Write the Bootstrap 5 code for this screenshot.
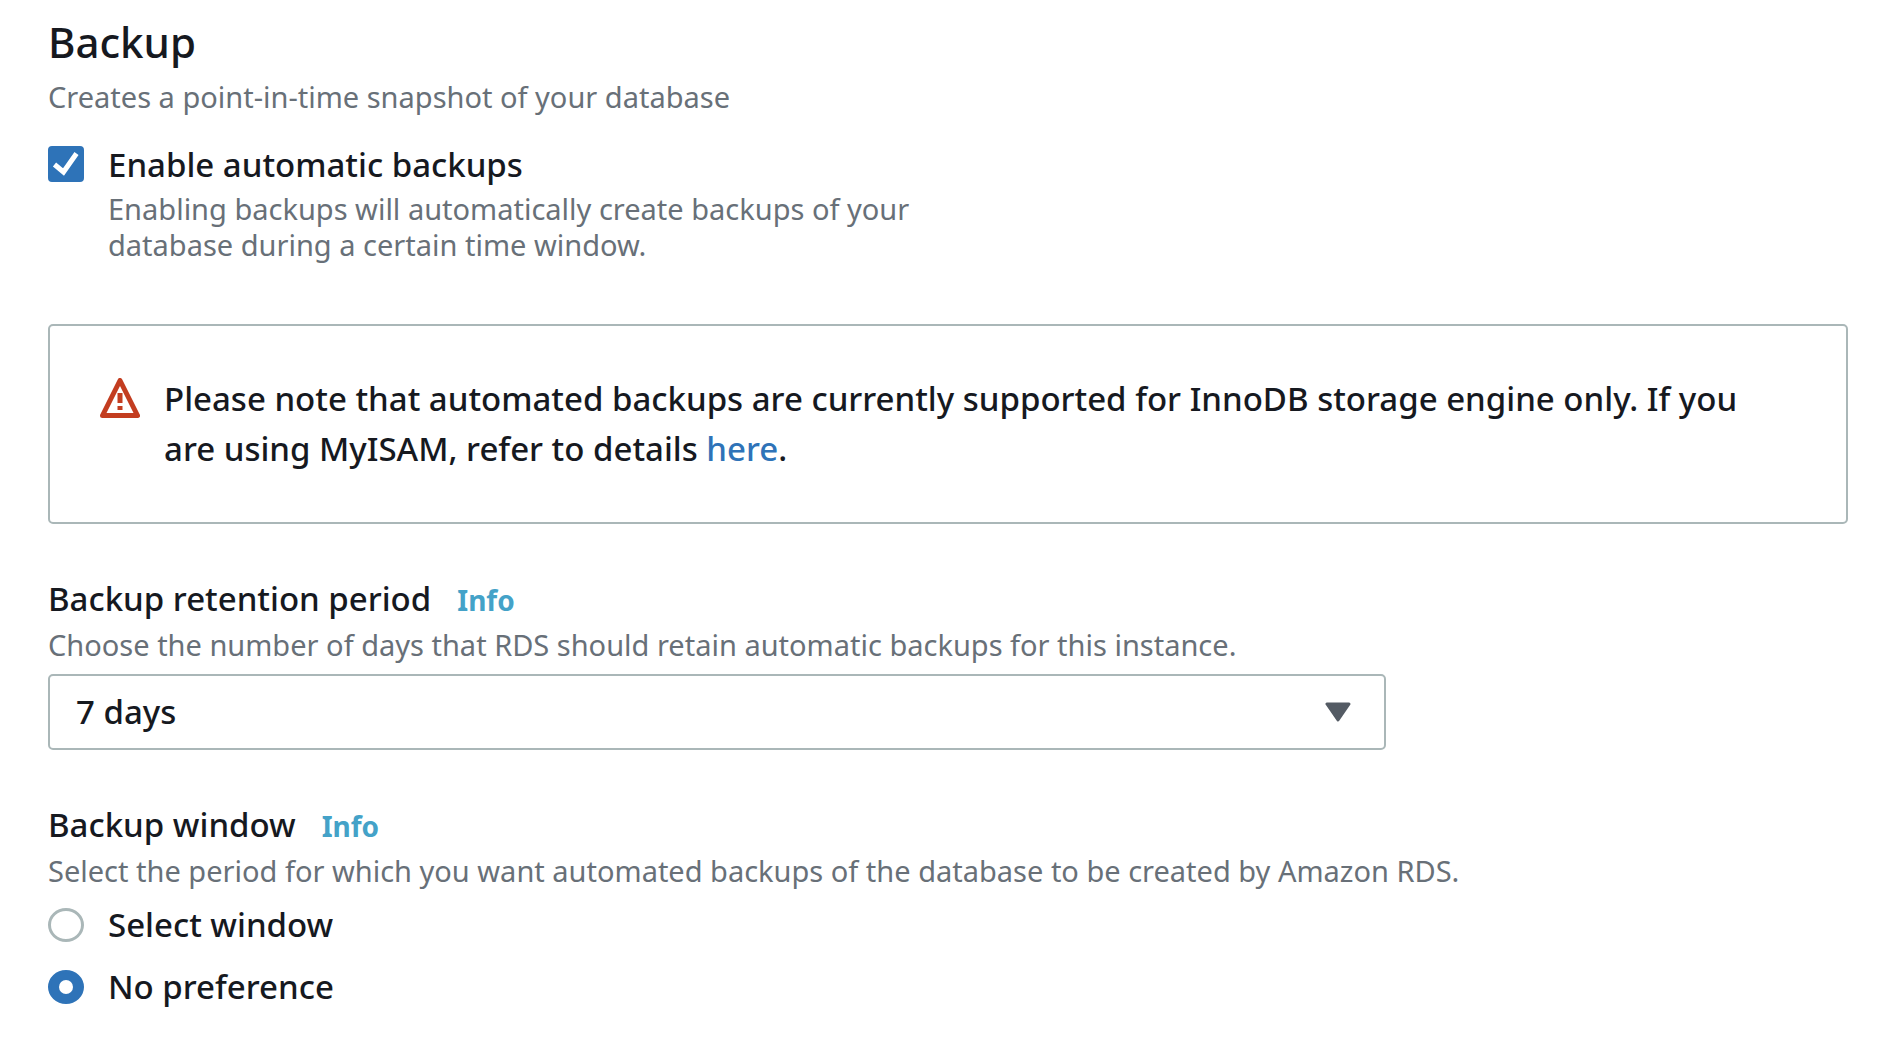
<!DOCTYPE html>
<html lang="en">
<head>
<meta charset="utf-8">
<meta name="viewport" content="width=device-width, initial-scale=1">
<title>Backup settings</title>
<link rel="stylesheet" href="https://cdn.jsdelivr.net/npm/bootstrap@5.3.0/dist/css/bootstrap.min.css">
<style>
  body { font-family: "Noto Sans", "Open Sans", sans-serif; font-size: 33px; font-weight: 500; line-height: 50px; color: #16191f; background: #fff; }
  .settings { padding: 15px 36px 36px 48px; }
  .settings-title { margin-bottom: 10px; font-size: 42px; line-height: 54px; font-weight: 500; }
  .hint { margin-bottom: 0; font-size: 29px; font-weight: 400; line-height: 36px; color: #687078; }
  .field .hint { margin-top: 3px; }
  .hint-narrow { max-width: 830px; margin-top: 1px; }
  .option { gap: 24px; }
  .option-lead { margin-top: 25px; }
  .option .form-check-input { width: 36px; height: 36px; margin: 6px 0 0; border: 2px solid #aab7b8; }
  .option .form-check-input[type=radio] { height: 34px; margin-top: 8px; border-width: 3px; }
  .option .form-check-input[type=checkbox] { border-radius: 4px; }
  .option .form-check-input:checked { background-color: #2e73b8; border-color: #2e73b8; background-size: 36px 36px; background-position: center; }
  .option .form-check-input[type=checkbox]:checked { background-image: url("data:image/svg+xml,%3Csvg xmlns='http://www.w3.org/2000/svg' viewBox='0 0 36 36'%3E%3Cpath d='M6.500 18.500L15.500 26L28.500 7.500' fill='none' stroke='%23fff' stroke-width='5'/%3E%3C/svg%3E"); }
  .option .form-check-input[type=radio]:checked { background-image: url("data:image/svg+xml,%3Csvg xmlns='http://www.w3.org/2000/svg' viewBox='0 0 36 36'%3E%3Ccircle cx='18' cy='18' r='7' fill='%23fff'/%3E%3C/svg%3E"); }
  .notice { margin-top: 61px; padding: 48px 60px 48px 50px; gap: 24px; border: 2px solid #aab7b8; border-radius: 5px; }
  .notice svg { margin-top: 4px; }
  .notice a { color: #2e73b8; }
  .field { margin-top: 50px; }
  .field-head { gap: 26px; }
  .info-link { font-size: 28px; font-weight: 700; line-height: 36px; color: #44a2c8; }
  .settings .form-select { height: 76px; margin-top: 11px; padding: 0 80px 0 26px; font-size: 33px; font-weight: 500; line-height: 50px; color: #16191f; border: 2px solid #aab7b8; border-radius: 5px;
    background-image: url("data:image/svg+xml,%3Csvg xmlns='http://www.w3.org/2000/svg' viewBox='0 0 26 20'%3E%3Cpath d='M2 2H24L13 18Z' fill='%23545b64' stroke='%23545b64' stroke-width='3' stroke-linejoin='round'/%3E%3C/svg%3E"); background-size: 26px 20px; background-position: right 33px center; }
  .choices { gap: 12px; margin-top: 11px; }
</style>
<script src="https://cdn.jsdelivr.net/npm/bootstrap@5.3.0/dist/js/bootstrap.bundle.min.js"></script>
</head>
<body>
<main class="settings">
  <h1 class="settings-title">Backup</h1>
  <p class="hint">Creates a point-in-time snapshot of your database</p>

  <div class="option option-lead d-flex">
    <input class="form-check-input flex-shrink-0" type="checkbox" id="autoBackup" aria-describedby="autoBackupHint" checked>
    <div>
      <label class="d-block" for="autoBackup">Enable automatic backups</label>
      <p class="hint hint-narrow" id="autoBackupHint">Enabling backups will automatically create backups of your database during a certain time window.</p>
    </div>
  </div>

  <div class="notice d-flex" role="note">
    <svg class="flex-shrink-0" width="40" height="40" viewBox="0 0 40 40" fill="none" aria-hidden="true">
      <path d="M20 2.500L37.500 37.500H2.500Z" stroke="#c33d20" stroke-width="5" stroke-linejoin="round"/>
      <path d="M20 15V25M20 28V32" stroke="#c33d20" stroke-width="5"/>
    </svg>
    <p class="mb-0">Please note that automated backups are currently supported for InnoDB storage engine only. If you are using MyISAM, refer to details <a class="text-decoration-none" href="#">here</a>.</p>
  </div>

  <section class="field">
    <div class="field-head d-flex align-items-baseline">
      <label for="retention">Backup retention period</label>
      <a class="info-link text-decoration-none" href="#">Info</a>
    </div>
    <p class="hint" id="retentionHint">Choose the number of days that RDS should retain automatic backups for this instance.</p>
    <div class="row gx-5">
      <div class="col-9">
        <select class="form-select" id="retention" aria-describedby="retentionHint">
          <option selected>7 days</option>
        </select>
      </div>
    </div>
  </section>

  <section class="field" role="radiogroup" aria-labelledby="windowLabel">
    <div class="field-head d-flex align-items-baseline">
      <span id="windowLabel">Backup window</span>
      <a class="info-link text-decoration-none" href="#">Info</a>
    </div>
    <p class="hint">Select the period for which you want automated backups of the database to be created by Amazon RDS.</p>
    <div class="choices d-flex flex-column">
      <div class="option d-flex">
        <input class="form-check-input flex-shrink-0" type="radio" name="window" id="windowSelect">
        <label for="windowSelect">Select window</label>
      </div>
      <div class="option d-flex">
        <input class="form-check-input flex-shrink-0" type="radio" name="window" id="windowNone" checked>
        <label for="windowNone">No preference</label>
      </div>
    </div>
  </section>
</main>
</body>
</html>
